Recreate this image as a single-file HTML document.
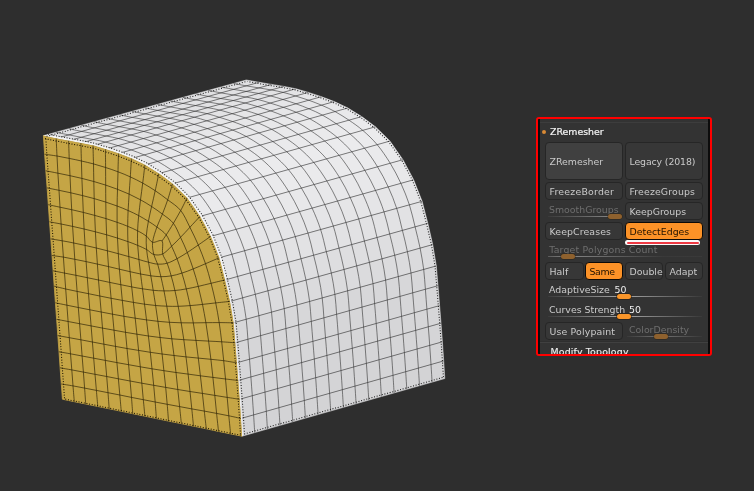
<!DOCTYPE html>
<html><head><meta charset="utf-8"><title>ZRemesher</title>
<style>
html,body{margin:0;padding:0;background:#2e2e2e;}
body{width:754px;height:491px;position:relative;overflow:hidden;font-family:"DejaVu Sans","Liberation Sans",sans-serif;}
.mesh{position:absolute;left:0;top:0;}
.panel{position:absolute;left:536px;top:117px;width:172px;height:235px;border:2px solid #ff0000;border-radius:3px;background:#333333;overflow:hidden;}
.panel .inner{position:absolute;left:-538px;top:-119px;width:754px;height:491px;will-change:transform;}
.blk{position:absolute;left:538px;top:119px;width:2px;height:235px;background:#0c0c0c;}
.sep{position:absolute;height:1px;background:#424242;}
.t{position:absolute;white-space:nowrap;font-size:9.4px;line-height:12px;color:#cdcdcd;}
.btn{position:absolute;box-sizing:border-box;border:1px solid #262626;border-radius:4px;background:#373737;color:#cacaca;font-size:9.4px;white-space:nowrap;}
.btn span{position:absolute;left:3.5px;}
.on{background:#fc9227;color:#241400;border-color:#0c0a08;}
.dis{color:#6e6e6e;}
.sl{position:absolute;height:1.2px;background:linear-gradient(90deg,rgba(130,130,130,0.12),rgba(160,160,160,0.95) 42%,rgba(160,160,160,0.95) 56%,rgba(130,130,130,0.08));}
.sl.f{background:linear-gradient(90deg,rgba(110,110,110,0.2),rgba(135,135,135,0.85) 35%,rgba(135,135,135,0.85) 55%,rgba(110,110,110,0.1));}
.kn{position:absolute;height:5.7px;border-radius:2.85px;background:#f8952a;box-shadow:0 0 0 0.6px rgba(30,18,4,0.75);}
.kn.d{background:#8e612e;box-shadow:0 0 0 0.5px rgba(40,28,12,0.6);}
</style></head><body>
<svg class="mesh" width="754" height="491" viewBox="0 0 754 491">
<g><path d="M43.4,135.7 L246.3,80.0 L259.1,82.3 L56.2,138.4Z" fill="rgb(224,224,226)" stroke="rgb(224,224,226)" stroke-width="0.6"/><path d="M56.2,138.4 L259.1,82.3 L271.5,84.4 L68.6,140.8Z" fill="rgb(225,225,227)" stroke="rgb(225,225,227)" stroke-width="0.6"/><path d="M68.6,140.8 L271.5,84.4 L283.8,86.4 L80.9,143.1Z" fill="rgb(225,225,227)" stroke="rgb(225,225,227)" stroke-width="0.6"/><path d="M80.9,143.1 L283.8,86.4 L295.9,88.8 L93.0,145.6Z" fill="rgb(226,226,228)" stroke="rgb(226,226,228)" stroke-width="0.6"/><path d="M93.0,145.6 L295.9,88.8 L308.3,92.4 L105.4,149.2Z" fill="rgb(227,227,229)" stroke="rgb(227,227,229)" stroke-width="0.6"/><path d="M105.4,149.2 L308.3,92.4 L321.4,96.7 L118.5,153.5Z" fill="rgb(229,229,231)" stroke="rgb(229,229,231)" stroke-width="0.6"/><path d="M118.5,153.5 L321.4,96.7 L334.3,101.6 L131.4,158.5Z" fill="rgb(230,230,232)" stroke="rgb(230,230,232)" stroke-width="0.6"/><path d="M131.4,158.5 L334.3,101.6 L347.8,108.0 L144.9,164.9Z" fill="rgb(232,232,234)" stroke="rgb(232,232,234)" stroke-width="0.6"/><path d="M144.9,164.9 L347.8,108.0 L361.7,116.6 L158.8,173.6Z" fill="rgb(233,233,235)" stroke="rgb(233,233,235)" stroke-width="0.6"/><path d="M158.8,173.6 L361.7,116.6 L375.4,126.8 L172.5,183.8Z" fill="rgb(234,234,236)" stroke="rgb(234,234,236)" stroke-width="0.6"/><path d="M172.5,183.8 L375.4,126.8 L389.9,141.1 L187.0,198.0Z" fill="rgb(235,235,237)" stroke="rgb(235,235,237)" stroke-width="0.6"/><path d="M187.0,198.0 L389.9,141.1 L402.9,159.7 L200.0,216.4Z" fill="rgb(234,234,236)" stroke="rgb(234,234,236)" stroke-width="0.6"/><path d="M200.0,216.4 L402.9,159.7 L413.6,179.8 L210.7,236.4Z" fill="rgb(232,232,234)" stroke="rgb(232,232,234)" stroke-width="0.6"/><path d="M210.7,236.4 L413.6,179.8 L422.1,201.3 L219.2,257.8Z" fill="rgb(229,229,231)" stroke="rgb(229,229,231)" stroke-width="0.6"/><path d="M219.2,257.8 L422.1,201.3 L427.8,223.3 L224.9,280.0Z" fill="rgb(226,226,228)" stroke="rgb(226,226,228)" stroke-width="0.6"/><path d="M224.9,280.0 L427.8,223.3 L432.7,244.6 L229.9,301.4Z" fill="rgb(222,222,224)" stroke="rgb(222,222,224)" stroke-width="0.6"/><path d="M229.9,301.4 L432.7,244.6 L436.3,265.9 L233.5,322.8Z" fill="rgb(219,219,221)" stroke="rgb(219,219,221)" stroke-width="0.6"/><path d="M233.5,322.8 L436.3,265.9 L438.0,285.7 L235.2,342.8Z" fill="rgb(215,215,217)" stroke="rgb(215,215,217)" stroke-width="0.6"/><path d="M235.2,342.8 L438.0,285.7 L439.6,305.6 L236.8,362.8Z" fill="rgb(214,214,216)" stroke="rgb(214,214,216)" stroke-width="0.6"/><path d="M236.8,362.8 L439.6,305.6 L441.0,323.2 L238.2,380.5Z" fill="rgb(214,214,216)" stroke="rgb(214,214,216)" stroke-width="0.6"/><path d="M238.2,380.5 L441.0,323.2 L442.4,341.8 L239.6,399.3Z" fill="rgb(213,213,215)" stroke="rgb(213,213,215)" stroke-width="0.6"/><path d="M239.6,399.3 L442.4,341.8 L443.7,360.9 L240.9,418.5Z" fill="rgb(212,212,214)" stroke="rgb(212,212,214)" stroke-width="0.6"/><path d="M240.9,418.5 L443.7,360.9 L444.8,378.5 L242.0,436.2Z" fill="rgb(211,211,213)" stroke="rgb(211,211,213)" stroke-width="0.6"/></g>
<path d="M56.2,138.4 L259.1,82.3 M68.6,140.8 L271.5,84.4 M80.9,143.1 L283.8,86.4 M93.0,145.6 L295.9,88.8 M105.4,149.2 L308.3,92.4 M118.5,153.5 L321.4,96.7 M131.4,158.5 L334.3,101.6 M144.9,164.9 L347.8,108.0 M158.8,173.6 L361.7,116.6 M172.5,183.8 L375.4,126.8 M187.0,198.0 L389.9,141.1 M200.0,216.4 L402.9,159.7 M210.7,236.4 L413.6,179.8 M219.2,257.8 L422.1,201.3 M224.9,280.0 L427.8,223.3 M229.9,301.4 L432.7,244.6 M233.5,322.8 L436.3,265.9 M235.2,342.8 L438.0,285.7 M236.8,362.8 L439.6,305.6 M238.2,380.5 L441.0,323.2 M239.6,399.3 L442.4,341.8 M240.9,418.5 L443.7,360.9 M56.1,132.2 C58.2,132.7 64.7,134.1 68.9,134.9 C73.1,135.7 77.2,136.5 81.3,137.3 C85.4,138.1 89.5,138.8 93.6,139.6 C97.6,140.3 101.6,141.0 105.7,142.1 C109.8,143.1 113.8,144.3 118.1,145.7 C122.3,147.0 126.8,148.4 131.2,149.9 C135.5,151.5 139.7,153.0 144.1,154.9 C148.5,156.8 153.0,158.8 157.6,161.3 C162.1,163.9 166.9,166.9 171.5,170.0 C176.1,173.2 180.5,176.2 185.2,180.2 C189.9,184.3 195.1,189.0 199.7,194.4 C204.3,199.9 208.7,206.5 212.7,212.9 C216.6,219.3 220.2,226.0 223.4,232.9 C226.6,239.8 229.5,247.0 231.9,254.3 C234.2,261.5 235.8,269.2 237.6,276.5 C239.4,283.7 241.1,290.7 242.6,297.8 C244.0,305.0 245.3,312.3 246.2,319.2 C247.1,326.1 247.3,332.6 247.9,339.2 C248.4,345.9 249.0,352.9 249.5,359.2 C250.0,365.5 250.4,370.8 250.9,376.9 C251.3,383.0 251.8,389.4 252.3,395.7 C252.7,402.0 253.2,408.8 253.6,414.9 C254.0,421.0 254.5,429.6 254.7,432.6 M68.8,128.7 C70.9,129.2 77.4,130.6 81.6,131.4 C85.8,132.2 89.8,133.0 94.0,133.7 C98.1,134.5 102.2,135.2 106.3,136.0 C110.3,136.8 114.3,137.5 118.4,138.5 C122.4,139.5 126.5,140.8 130.8,142.1 C135.0,143.4 139.5,144.8 143.9,146.4 C148.2,147.9 152.4,149.5 156.8,151.4 C161.2,153.3 165.7,155.3 170.3,157.8 C174.8,160.3 179.6,163.3 184.2,166.5 C188.8,169.6 193.2,172.6 197.9,176.7 C202.6,180.7 207.8,185.5 212.4,190.9 C216.9,196.3 221.4,202.9 225.4,209.3 C229.3,215.7 232.9,222.4 236.1,229.3 C239.3,236.2 242.2,243.5 244.6,250.7 C246.9,258.0 248.5,265.7 250.3,272.9 C252.0,280.2 253.8,287.2 255.3,294.3 C256.7,301.4 258.0,308.8 258.9,315.7 C259.7,322.6 260.0,329.0 260.6,335.7 C261.1,342.3 261.7,349.4 262.2,355.6 C262.7,361.9 263.1,367.3 263.6,373.3 C264.0,379.4 264.5,385.8 265.0,392.1 C265.4,398.4 265.9,405.2 266.3,411.3 C266.7,417.4 267.2,426.0 267.4,429.0 M81.4,125.3 C83.6,125.7 90.0,127.1 94.2,127.9 C98.4,128.7 102.5,129.5 106.6,130.2 C110.8,131.0 114.9,131.7 118.9,132.5 C123.0,133.2 127.0,133.9 131.0,135.0 C135.1,136.0 139.2,137.2 143.4,138.6 C147.7,139.9 152.2,141.3 156.5,142.8 C160.9,144.4 165.0,145.9 169.4,147.8 C173.8,149.7 178.4,151.7 182.9,154.2 C187.5,156.7 192.2,159.8 196.8,162.9 C201.4,166.1 205.8,169.0 210.5,173.1 C215.2,177.2 220.5,181.9 225.0,187.3 C229.6,192.8 234.1,199.4 238.0,205.8 C242.0,212.2 245.5,218.9 248.7,225.8 C251.9,232.7 254.9,239.9 257.2,247.2 C259.6,254.5 261.2,262.1 262.9,269.4 C264.7,276.6 266.5,283.6 267.9,290.7 C269.4,297.9 270.6,305.2 271.5,312.1 C272.4,319.0 272.7,325.4 273.2,332.1 C273.8,338.8 274.3,345.8 274.8,352.1 C275.3,358.3 275.8,363.7 276.2,369.8 C276.7,375.8 277.2,382.2 277.6,388.5 C278.1,394.9 278.5,401.6 278.9,407.7 C279.3,413.8 279.8,422.4 280.0,425.4 M94.1,121.8 C96.3,122.2 102.7,123.6 106.9,124.4 C111.1,125.2 115.2,125.9 119.3,126.7 C123.4,127.5 127.6,128.1 131.6,128.9 C135.7,129.7 139.6,130.4 143.7,131.4 C147.8,132.4 151.9,133.7 156.1,135.0 C160.4,136.3 164.9,137.7 169.2,139.3 C173.6,140.8 177.7,142.4 182.1,144.3 C186.5,146.2 191.1,148.2 195.6,150.7 C200.2,153.2 204.9,156.2 209.5,159.4 C214.1,162.5 218.5,165.5 223.2,169.5 C227.9,173.6 233.1,178.3 237.7,183.8 C242.3,189.2 246.8,195.8 250.7,202.2 C254.7,208.6 258.2,215.3 261.4,222.2 C264.6,229.2 267.5,236.4 269.9,243.7 C272.3,250.9 273.8,258.6 275.6,265.8 C277.4,273.1 279.2,280.1 280.6,287.2 C282.0,294.3 283.3,301.7 284.2,308.6 C285.1,315.5 285.4,321.9 285.9,328.5 C286.5,335.2 287.0,342.2 287.5,348.5 C288.0,354.8 288.4,360.1 288.9,366.2 C289.4,372.2 289.9,378.6 290.3,384.9 C290.8,391.3 291.2,398.0 291.6,404.1 C292.0,410.2 292.5,418.8 292.7,421.8 M106.8,118.3 C108.9,118.7 115.4,120.1 119.6,120.9 C123.8,121.7 127.9,122.4 132.0,123.2 C136.1,123.9 140.2,124.6 144.3,125.4 C148.4,126.1 152.3,126.8 156.4,127.9 C160.5,128.9 164.6,130.1 168.8,131.5 C173.1,132.8 177.6,134.2 181.9,135.7 C186.2,137.3 190.4,138.8 194.8,140.7 C199.2,142.6 203.7,144.6 208.3,147.1 C212.9,149.6 217.6,152.7 222.2,155.8 C226.8,158.9 231.2,161.9 235.9,166.0 C240.6,170.1 245.8,174.8 250.4,180.2 C255.0,185.7 259.4,192.3 263.4,198.7 C267.3,205.1 270.9,211.8 274.1,218.7 C277.3,225.6 280.2,232.9 282.6,240.1 C285.0,247.4 286.5,255.0 288.3,262.3 C290.1,269.5 291.9,276.5 293.3,283.6 C294.7,290.8 296.0,298.1 296.9,305.0 C297.8,311.9 298.0,318.3 298.6,325.0 C299.1,331.6 299.7,338.7 300.2,344.9 C300.7,351.2 301.1,356.5 301.6,362.6 C302.0,368.7 302.5,375.0 303.0,381.3 C303.4,387.7 303.9,394.4 304.3,400.5 C304.7,406.6 305.2,415.2 305.4,418.2 M119.5,114.8 C121.6,115.2 128.1,116.6 132.3,117.4 C136.5,118.2 140.6,118.9 144.7,119.6 C148.8,120.4 152.9,121.0 157.0,121.8 C161.1,122.6 165.0,123.3 169.1,124.3 C173.2,125.3 177.2,126.6 181.5,127.9 C185.7,129.2 190.3,130.6 194.6,132.2 C198.9,133.7 203.1,135.3 207.5,137.2 C211.9,139.1 216.4,141.1 221.0,143.6 C225.6,146.1 230.3,149.1 234.9,152.2 C239.5,155.4 243.9,158.3 248.6,162.4 C253.3,166.5 258.5,171.2 263.1,176.7 C267.7,182.1 272.1,188.7 276.1,195.1 C280.0,201.5 283.6,208.3 286.8,215.2 C290.0,222.1 292.9,229.3 295.3,236.6 C297.6,243.9 299.2,251.5 301.0,258.8 C302.8,266.0 304.5,273.0 306.0,280.1 C307.4,287.2 308.7,294.6 309.6,301.4 C310.4,308.3 310.7,314.7 311.3,321.4 C311.8,328.0 312.4,335.1 312.9,341.3 C313.4,347.6 313.8,352.9 314.3,359.0 C314.7,365.1 315.2,371.4 315.7,377.8 C316.1,384.1 316.6,390.8 317.0,396.9 C317.4,403.0 317.9,411.6 318.1,414.6 M132.2,111.3 C134.3,111.8 140.8,113.1 145.0,113.9 C149.2,114.7 153.3,115.4 157.4,116.1 C161.5,116.9 165.6,117.5 169.7,118.3 C173.7,119.0 177.7,119.8 181.8,120.8 C185.9,121.8 189.9,123.0 194.2,124.4 C198.4,125.7 202.9,127.1 207.3,128.6 C211.6,130.2 215.8,131.7 220.2,133.6 C224.6,135.5 229.1,137.5 233.7,140.0 C238.2,142.5 243.0,145.5 247.6,148.7 C252.2,151.8 256.6,154.8 261.3,158.9 C266.0,162.9 271.2,167.7 275.8,173.1 C280.3,178.6 284.8,185.2 288.8,191.6 C292.7,198.0 296.3,204.7 299.5,211.6 C302.7,218.5 305.6,225.8 308.0,233.1 C310.3,240.3 311.9,248.0 313.6,255.2 C315.4,262.5 317.2,269.4 318.6,276.5 C320.1,283.7 321.4,291.0 322.2,297.9 C323.1,304.8 323.4,311.2 323.9,317.8 C324.5,324.5 325.0,331.5 325.5,337.8 C326.0,344.0 326.5,349.4 326.9,355.4 C327.4,361.5 327.9,367.8 328.3,374.2 C328.8,380.5 329.2,387.2 329.6,393.3 C330.0,399.4 330.5,408.0 330.7,411.0 M144.8,107.8 C147.0,108.3 153.4,109.6 157.6,110.4 C161.8,111.2 165.9,111.9 170.0,112.6 C174.2,113.3 178.3,114.0 182.3,114.7 C186.4,115.5 190.4,116.2 194.4,117.2 C198.5,118.2 202.6,119.5 206.8,120.8 C211.1,122.1 215.6,123.5 219.9,125.1 C224.3,126.6 228.4,128.2 232.8,130.1 C237.2,132.0 241.8,133.9 246.3,136.5 C250.9,139.0 255.6,142.0 260.2,145.1 C264.8,148.3 269.2,151.2 273.9,155.3 C278.6,159.4 283.9,164.1 288.4,169.6 C293.0,175.0 297.5,181.6 301.4,188.0 C305.4,194.5 308.9,201.2 312.1,208.1 C315.3,215.0 318.3,222.3 320.6,229.5 C323.0,236.8 324.5,244.4 326.3,251.7 C328.1,258.9 329.9,265.9 331.3,273.0 C332.8,280.1 334.0,287.5 334.9,294.3 C335.8,301.2 336.1,307.6 336.6,314.3 C337.2,320.9 337.7,327.9 338.2,334.2 C338.7,340.5 339.1,345.8 339.6,351.8 C340.1,357.9 340.6,364.3 341.0,370.6 C341.5,376.9 341.9,383.6 342.3,389.7 C342.7,395.8 343.2,404.4 343.4,407.4 M157.5,104.4 C159.7,104.8 166.1,106.1 170.3,106.9 C174.5,107.7 178.6,108.4 182.7,109.1 C186.8,109.8 191.0,110.4 195.0,111.2 C199.1,111.9 203.0,112.7 207.1,113.7 C211.2,114.7 215.3,115.9 219.5,117.3 C223.8,118.6 228.3,120.0 232.6,121.5 C237.0,123.1 241.1,124.6 245.5,126.5 C249.9,128.4 254.5,130.4 259.0,132.9 C263.6,135.4 268.3,138.4 272.9,141.6 C277.5,144.7 281.9,147.7 286.6,151.7 C291.3,155.8 296.5,160.6 301.1,166.0 C305.7,171.5 310.2,178.1 314.1,184.5 C318.1,190.9 321.6,197.6 324.8,204.6 C328.0,211.5 330.9,218.7 333.3,226.0 C335.7,233.3 337.2,240.9 339.0,248.1 C340.8,255.4 342.6,262.3 344.0,269.4 C345.4,276.6 346.7,283.9 347.6,290.8 C348.5,297.6 348.7,304.1 349.3,310.7 C349.8,317.3 350.4,324.4 350.9,330.6 C351.4,336.9 351.8,342.2 352.3,348.3 C352.8,354.3 353.2,360.7 353.7,367.0 C354.1,373.3 354.6,380.0 355.0,386.1 C355.4,392.2 355.9,400.8 356.1,403.7 M170.2,100.9 C172.3,101.3 178.8,102.6 183.0,103.4 C187.2,104.1 191.3,104.8 195.4,105.5 C199.5,106.3 203.6,106.9 207.7,107.6 C211.8,108.4 215.7,109.1 219.8,110.1 C223.9,111.1 228.0,112.4 232.2,113.7 C236.5,115.0 241.0,116.4 245.3,118.0 C249.6,119.5 253.8,121.1 258.2,123.0 C262.6,124.9 267.1,126.8 271.7,129.3 C276.3,131.8 281.0,134.9 285.6,138.0 C290.2,141.1 294.6,144.1 299.3,148.2 C304.0,152.2 309.2,157.0 313.8,162.5 C318.4,167.9 322.8,174.5 326.8,180.9 C330.7,187.4 334.3,194.1 337.5,201.0 C340.7,207.9 343.6,215.2 346.0,222.5 C348.4,229.7 349.9,237.4 351.7,244.6 C353.5,251.8 355.2,258.8 356.7,265.9 C358.1,273.0 359.4,280.3 360.3,287.2 C361.2,294.1 361.4,300.5 362.0,307.1 C362.5,313.8 363.1,320.8 363.6,327.0 C364.1,333.3 364.5,338.6 365.0,344.7 C365.4,350.7 365.9,357.1 366.4,363.4 C366.8,369.7 367.3,376.4 367.7,382.5 C368.1,388.6 368.6,397.2 368.8,400.1 M182.9,97.4 C185.0,97.8 191.5,99.1 195.7,99.9 C199.9,100.6 204.0,101.3 208.1,102.0 C212.2,102.7 216.3,103.3 220.4,104.1 C224.5,104.8 228.4,105.6 232.5,106.6 C236.6,107.6 240.6,108.8 244.9,110.2 C249.1,111.5 253.7,112.9 258.0,114.4 C262.3,116.0 266.5,117.5 270.9,119.4 C275.3,121.3 279.8,123.3 284.4,125.8 C289.0,128.3 293.7,131.3 298.3,134.4 C302.9,137.6 307.3,140.5 312.0,144.6 C316.7,148.7 321.9,153.4 326.5,158.9 C331.1,164.4 335.5,171.0 339.5,177.4 C343.4,183.8 347.0,190.5 350.2,197.5 C353.4,204.4 356.3,211.7 358.7,218.9 C361.0,226.2 362.6,233.8 364.4,241.0 C366.1,248.3 367.9,255.2 369.4,262.3 C370.8,269.4 372.1,276.8 373.0,283.7 C373.8,290.5 374.1,296.9 374.6,303.6 C375.2,310.2 375.7,317.2 376.2,323.5 C376.7,329.7 377.2,335.0 377.6,341.1 C378.1,347.1 378.6,353.5 379.0,359.8 C379.5,366.1 379.9,372.8 380.3,378.9 C380.7,385.0 381.2,393.6 381.4,396.5 M195.6,93.9 C197.7,94.3 204.2,95.6 208.4,96.4 C212.6,97.1 216.7,97.8 220.8,98.5 C224.9,99.2 229.0,99.8 233.1,100.5 C237.1,101.3 241.1,102.0 245.2,103.0 C249.3,104.0 253.3,105.3 257.6,106.6 C261.8,107.9 266.3,109.3 270.7,110.9 C275.0,112.4 279.2,114.0 283.6,115.9 C288.0,117.8 292.5,119.7 297.1,122.2 C301.6,124.7 306.4,127.8 311.0,130.9 C315.6,134.0 320.0,137.0 324.7,141.0 C329.4,145.1 334.6,149.9 339.2,155.4 C343.7,160.8 348.2,167.4 352.2,173.8 C356.1,180.3 359.7,187.0 362.8,193.9 C366.0,200.9 369.0,208.2 371.3,215.4 C373.7,222.7 375.3,230.3 377.0,237.5 C378.8,244.7 380.6,251.7 382.0,258.8 C383.5,265.9 384.7,273.2 385.6,280.1 C386.5,287.0 386.8,293.4 387.3,300.0 C387.9,306.6 388.4,313.6 388.9,319.9 C389.4,326.1 389.8,331.5 390.3,337.5 C390.8,343.6 391.3,349.9 391.7,356.2 C392.2,362.5 392.6,369.2 393.0,375.3 C393.4,381.4 393.9,390.0 394.1,392.9 M208.3,90.4 C210.4,90.8 216.9,92.1 221.1,92.9 C225.3,93.6 229.3,94.3 233.5,95.0 C237.6,95.7 241.7,96.2 245.8,97.0 C249.8,97.7 253.8,98.5 257.9,99.5 C261.9,100.5 266.0,101.7 270.3,103.1 C274.5,104.4 279.0,105.8 283.4,107.3 C287.7,108.9 291.9,110.4 296.3,112.3 C300.6,114.2 305.2,116.2 309.7,118.7 C314.3,121.2 319.0,124.2 323.6,127.3 C328.2,130.5 332.6,133.4 337.3,137.5 C342.0,141.5 347.3,146.3 351.8,151.8 C356.4,157.3 360.9,163.9 364.8,170.3 C368.8,176.7 372.3,183.5 375.5,190.4 C378.7,197.3 381.7,204.6 384.0,211.9 C386.4,219.1 387.9,226.7 389.7,234.0 C391.5,241.2 393.3,248.2 394.7,255.2 C396.1,262.3 397.4,269.7 398.3,276.5 C399.2,283.4 399.5,289.8 400.0,296.4 C400.5,303.1 401.1,310.1 401.6,316.3 C402.1,322.6 402.5,327.9 403.0,333.9 C403.5,340.0 403.9,346.3 404.4,352.6 C404.8,358.9 405.3,365.6 405.7,371.7 C406.1,377.8 406.6,386.4 406.8,389.3 M220.9,87.0 C223.1,87.4 229.5,88.6 233.7,89.4 C237.9,90.1 242.0,90.8 246.1,91.4 C250.3,92.1 254.4,92.7 258.4,93.4 C262.5,94.2 266.5,94.9 270.5,95.9 C274.6,96.9 278.7,98.2 282.9,99.5 C287.2,100.8 291.7,102.2 296.0,103.8 C300.4,105.3 304.5,106.9 308.9,108.8 C313.3,110.6 317.9,112.6 322.4,115.1 C327.0,117.6 331.7,120.6 336.3,123.8 C340.9,126.9 345.3,129.8 350.0,133.9 C354.7,138.0 359.9,142.8 364.5,148.2 C369.1,153.7 373.6,160.3 377.5,166.8 C381.5,173.2 385.0,179.9 388.2,186.9 C391.4,193.8 394.3,201.1 396.7,208.4 C399.1,215.6 400.6,223.2 402.4,230.4 C404.2,237.6 406.0,244.6 407.4,251.7 C408.8,258.8 410.1,266.1 411.0,273.0 C411.9,279.8 412.1,286.2 412.7,292.9 C413.2,299.5 413.8,306.5 414.3,312.7 C414.8,319.0 415.2,324.3 415.7,330.3 C416.1,336.4 416.6,342.7 417.1,349.0 C417.5,355.3 418.0,362.0 418.4,368.1 C418.8,374.2 419.3,382.8 419.5,385.7 M233.6,83.5 C235.8,83.9 242.2,85.1 246.4,85.9 C250.6,86.6 254.7,87.3 258.8,87.9 C262.9,88.6 267.1,89.2 271.1,89.9 C275.2,90.6 279.1,91.4 283.2,92.4 C287.3,93.4 291.4,94.7 295.6,96.0 C299.9,97.3 304.4,98.7 308.7,100.2 C313.0,101.8 317.2,103.3 321.6,105.2 C326.0,107.1 330.5,109.1 335.1,111.6 C339.7,114.1 344.4,117.1 349.0,120.2 C353.6,123.3 358.0,126.3 362.7,130.3 C367.4,134.4 372.6,139.2 377.2,144.7 C381.8,150.2 386.2,156.8 390.2,163.2 C394.1,169.6 397.7,176.4 400.9,183.3 C404.1,190.3 407.0,197.6 409.4,204.8 C411.7,212.1 413.3,219.7 415.1,226.9 C416.9,234.1 418.6,241.1 420.1,248.1 C421.5,255.2 422.8,262.6 423.7,269.4 C424.5,276.3 424.8,282.7 425.4,289.3 C425.9,295.9 426.4,302.9 426.9,309.2 C427.4,315.4 427.9,320.7 428.3,326.8 C428.8,332.8 429.3,339.1 429.7,345.4 C430.2,351.7 430.6,358.4 431.0,364.5 C431.4,370.6 431.9,379.2 432.1,382.1" fill="none" stroke="#2b2b2b" stroke-opacity="0.6" stroke-width="0.95"/>
<path d="M43.4,135.7 L56.2,138.4 L68.6,140.8 L80.9,143.1 L93.0,145.6 L105.4,149.2 L118.5,153.5 L131.4,158.5 L144.9,164.9 L158.8,173.6 L172.5,183.8 L187.0,198.0 L200.0,216.4 L210.7,236.4 L219.2,257.8 L224.9,280.0 L229.9,301.4 L233.5,322.8 L235.2,342.8 L236.8,362.8 L238.2,380.5 L239.6,399.3 L240.9,418.5 L242.0,436.2 L230.6,433.9 L218.5,431.4 L206.3,428.8 L193.5,426.2 L181.4,423.7 L168.5,421.1 L156.4,418.6 L144.9,416.2 L132.7,413.7 L121.3,411.3 L109.2,408.8 L97.8,406.5 L85.7,404.0 L74.3,401.7 L62.4,399.2 L61.3,384.0 L60.1,367.8 L59.0,351.8 L57.8,335.6 L56.6,319.3 L55.4,302.8 L54.2,286.2 L53.1,270.8 L52.0,255.5 L50.8,238.9 L49.5,221.8 L48.3,204.7 L47.1,187.9 L45.8,170.8 L44.6,154.2Z" fill="#c5a545" stroke="#c5a545" stroke-width="0.8"/>
<path d="M74.3,401.7 C74.1,399.0 73.4,391.2 73.0,385.9 C72.6,380.6 72.2,375.3 71.8,369.9 C71.4,364.6 71.0,359.2 70.5,353.8 C70.1,348.5 69.7,343.1 69.3,337.7 C68.9,332.3 68.5,326.9 68.1,321.5 C67.7,316.0 67.3,310.6 66.9,305.2 C66.5,299.8 66.1,294.3 65.7,289.0 C65.3,283.6 64.9,278.4 64.5,273.1 C64.1,267.8 63.8,262.5 63.4,257.1 C63.0,251.8 62.6,246.3 62.2,240.8 C61.9,235.2 61.5,229.6 61.1,224.0 C60.7,218.5 60.4,212.8 60.0,207.2 C59.7,201.6 59.3,195.9 59.0,190.3 C58.6,184.6 58.3,178.9 57.9,173.2 C57.6,167.5 57.3,161.8 57.0,156.0 C56.7,150.2 56.3,141.3 56.2,138.4 M85.7,404.0 C85.5,401.3 85.0,393.4 84.6,388.1 C84.2,382.8 83.8,377.4 83.4,372.1 C83.0,366.7 82.5,361.4 82.1,356.0 C81.7,350.6 81.3,345.2 80.9,339.8 C80.4,334.5 80.0,329.1 79.6,323.7 C79.2,318.3 78.8,312.9 78.3,307.5 C77.9,302.1 77.5,296.7 77.1,291.4 C76.7,286.0 76.3,280.7 75.9,275.3 C75.5,270.0 75.1,264.7 74.8,259.3 C74.4,253.9 74.0,248.4 73.7,243.0 C73.3,237.5 73.0,232.0 72.6,226.4 C72.3,220.9 72.0,215.3 71.7,209.7 C71.4,204.1 71.1,198.5 70.8,192.8 C70.5,187.2 70.2,181.5 70.0,175.7 C69.7,170.0 69.5,164.2 69.2,158.4 C69.0,152.6 68.7,143.7 68.6,140.8 M97.8,406.5 C97.6,403.8 96.8,395.8 96.4,390.4 C95.9,385.0 95.5,379.7 95.0,374.3 C94.6,368.9 94.2,363.5 93.7,358.2 C93.3,352.8 92.8,347.4 92.4,342.0 C92.0,336.7 91.5,331.3 91.1,325.9 C90.6,320.5 90.2,315.1 89.8,309.8 C89.3,304.4 88.9,299.1 88.5,293.7 C88.1,288.4 87.7,283.0 87.3,277.7 C86.9,272.3 86.5,267.0 86.1,261.6 C85.7,256.2 85.4,250.8 85.1,245.4 C84.7,240.0 84.4,234.5 84.1,229.0 C83.8,223.5 83.5,218.0 83.3,212.4 C83.0,206.9 82.8,201.2 82.6,195.6 C82.3,189.9 82.1,184.2 81.9,178.4 C81.7,172.7 81.6,166.8 81.4,161.0 C81.2,155.1 81.0,146.1 80.9,143.1 M109.2,408.8 C109.0,406.2 108.4,398.1 108.0,392.7 C107.6,387.3 107.1,381.9 106.7,376.5 C106.2,371.2 105.8,365.8 105.3,360.4 C104.9,355.0 104.4,349.6 103.9,344.2 C103.5,338.8 103.0,333.5 102.5,328.1 C102.1,322.7 101.6,317.4 101.2,312.0 C100.7,306.7 100.3,301.3 99.8,296.0 C99.4,290.7 99.0,285.4 98.5,280.0 C98.1,274.7 97.7,269.4 97.4,264.1 C97.0,258.7 96.6,253.4 96.3,248.0 C96.0,242.6 95.7,237.2 95.4,231.8 C95.2,226.4 94.9,220.9 94.7,215.4 C94.5,209.9 94.4,204.3 94.2,198.6 C94.1,193.0 93.9,187.3 93.8,181.5 C93.7,175.7 93.6,169.9 93.5,163.9 C93.3,157.9 93.1,148.6 93.0,145.6 M121.3,411.3 C121.0,408.6 120.3,400.5 119.8,395.0 C119.3,389.6 118.8,384.2 118.4,378.8 C117.9,373.4 117.4,368.0 116.9,362.6 C116.5,357.2 116.0,351.8 115.5,346.4 C115.0,341.0 114.5,335.6 114.0,330.2 C113.5,324.9 113.0,319.5 112.5,314.2 C112.1,308.9 111.6,303.6 111.1,298.3 C110.6,293.0 110.2,287.7 109.7,282.4 C109.3,277.1 108.9,271.9 108.5,266.6 C108.1,261.3 107.7,256.1 107.4,250.8 C107.1,245.5 106.8,240.2 106.6,234.8 C106.4,229.5 106.2,224.1 106.0,218.6 C105.9,213.2 105.8,207.7 105.8,202.1 C105.7,196.5 105.7,190.9 105.7,185.1 C105.6,179.3 105.7,173.5 105.6,167.5 C105.6,161.5 105.4,152.2 105.4,149.2 M132.7,413.7 C132.5,411.0 131.9,402.8 131.5,397.4 C131.0,391.9 130.5,386.5 130.1,381.0 C129.6,375.6 129.1,370.1 128.6,364.7 C128.1,359.3 127.6,353.9 127.0,348.5 C126.5,343.1 126.0,337.7 125.5,332.3 C124.9,326.9 124.4,321.6 123.9,316.3 C123.3,311.0 122.8,305.7 122.3,300.4 C121.8,295.2 121.3,289.9 120.8,284.7 C120.3,279.5 119.8,274.3 119.4,269.2 C119.0,264.0 118.6,258.8 118.3,253.7 C118.0,248.5 117.7,243.3 117.5,238.1 C117.3,232.9 117.1,227.6 117.1,222.3 C117.0,216.9 117.0,211.5 117.1,206.0 C117.2,200.5 117.3,195.0 117.5,189.3 C117.6,183.5 117.8,177.7 118.0,171.8 C118.1,165.8 118.4,156.5 118.5,153.5 M144.9,416.2 C144.6,413.4 143.9,405.2 143.3,399.7 C142.8,394.2 142.4,388.7 141.8,383.2 C141.3,377.7 140.8,372.2 140.3,366.8 C139.7,361.3 139.2,355.9 138.6,350.4 C138.1,345.0 137.5,339.6 136.9,334.2 C136.4,328.9 135.8,323.5 135.2,318.2 C134.6,312.9 134.0,307.6 133.4,302.4 C132.8,297.2 132.3,292.0 131.7,286.9 C131.2,281.8 130.6,276.7 130.1,271.7 C129.6,266.6 129.2,261.6 128.8,256.6 C128.4,251.6 128.1,246.6 127.9,241.6 C127.7,236.5 127.7,231.5 127.7,226.3 C127.7,221.1 127.9,215.9 128.1,210.5 C128.4,205.1 128.8,199.7 129.1,194.1 C129.5,188.5 129.9,182.8 130.3,176.9 C130.7,170.9 131.2,161.6 131.4,158.5 M156.4,418.6 C156.2,415.8 155.6,407.5 155.2,402.0 C154.7,396.4 154.2,390.9 153.7,385.3 C153.2,379.8 152.6,374.3 152.0,368.8 C151.5,363.3 150.9,357.8 150.3,352.3 C149.7,346.8 149.1,341.4 148.4,336.0 C147.8,330.6 147.2,325.2 146.5,319.9 C145.9,314.6 145.2,309.3 144.5,304.2 C143.8,299.0 143.2,293.9 142.5,288.8 C141.8,283.8 141.2,278.8 140.6,274.0 C140.0,269.1 139.4,264.3 138.9,259.5 C138.4,254.8 138.0,250.2 137.7,245.4 C137.5,240.6 137.4,235.8 137.6,230.8 C137.7,225.9 138.2,220.8 138.7,215.6 C139.2,210.4 139.9,205.2 140.5,199.8 C141.2,194.4 142.0,188.9 142.7,183.1 C143.5,177.3 144.5,167.9 144.9,164.9 M168.5,421.1 C168.3,418.3 167.7,409.9 167.2,404.3 C166.7,398.7 166.2,393.0 165.7,387.4 C165.1,381.8 164.5,376.2 163.9,370.7 C163.3,365.1 162.7,359.5 162.1,354.0 C161.4,348.5 160.7,343.0 160.1,337.5 C159.4,332.1 158.6,326.6 157.9,321.3 C157.2,316.0 156.4,310.7 155.6,305.5 C154.8,300.3 154.0,295.2 153.2,290.3 C152.4,285.3 151.6,280.4 150.8,275.8 C150.0,271.1 149.2,266.6 148.5,262.2 C147.8,257.9 146.9,253.9 146.6,249.5 C146.2,245.1 146.0,240.7 146.3,236.0 C146.6,231.3 147.5,226.2 148.4,221.3 C149.3,216.4 150.5,211.6 151.6,206.5 C152.8,201.4 154.0,196.2 155.2,190.7 C156.4,185.3 158.2,176.5 158.8,173.6 M181.4,423.7 C181.1,420.9 180.2,412.3 179.6,406.6 C179.0,400.9 178.4,395.2 177.8,389.5 C177.2,383.8 176.6,378.1 176.0,372.5 C175.3,366.8 174.7,361.1 174.0,355.5 C173.3,349.9 172.6,344.3 171.8,338.8 C171.0,333.2 170.3,327.7 169.4,322.3 C168.6,316.9 167.7,311.5 166.8,306.2 C165.9,301.0 164.9,295.8 164.0,290.9 C163.0,286.0 161.9,281.1 160.9,276.7 C159.8,272.2 158.7,267.8 157.6,264.1 C156.4,260.5 154.6,258.1 153.8,254.5 C153.0,250.9 152.1,246.9 152.6,242.3 C153.1,237.7 155.3,231.7 156.9,227.0 C158.5,222.3 160.6,218.7 162.4,214.1 C164.2,209.6 166.0,204.9 167.7,199.8 C169.4,194.7 171.7,186.5 172.5,183.8 M162.0,241.0 C162.7,240.0 164.3,237.8 166.2,234.9 C168.1,232.0 171.0,227.4 173.4,223.3 C175.8,219.2 178.4,214.7 180.7,210.5 C183.0,206.3 185.9,200.1 187.0,198.0 M61.3,384.0 C63.2,384.3 69.1,385.2 73.0,385.9 C76.9,386.6 80.7,387.3 84.6,388.1 C88.5,388.8 92.5,389.6 96.4,390.4 C100.3,391.2 104.1,391.9 108.0,392.7 C111.9,393.5 115.9,394.3 119.8,395.0 C123.7,395.8 127.5,396.6 131.5,397.4 C135.4,398.1 139.4,398.9 143.3,399.7 C147.3,400.4 151.2,401.2 155.2,402.0 C159.1,402.7 163.2,403.5 167.2,404.3 C171.3,405.0 175.5,405.8 179.6,406.6 C183.7,407.3 187.7,408.1 191.8,408.9 C196.0,409.6 200.2,410.4 204.3,411.1 C208.4,411.9 212.5,412.6 216.6,413.4 C220.7,414.2 224.8,414.9 228.8,415.8 C232.9,416.6 238.9,418.0 240.9,418.5 M60.1,367.8 C62.1,368.2 67.9,369.2 71.8,369.9 C75.6,370.6 79.5,371.3 83.4,372.1 C87.3,372.8 91.2,373.5 95.0,374.3 C98.9,375.0 102.8,375.8 106.7,376.5 C110.6,377.3 114.5,378.0 118.4,378.8 C122.3,379.5 126.2,380.3 130.1,381.0 C134.0,381.7 137.9,382.5 141.8,383.2 C145.8,383.9 149.7,384.6 153.7,385.3 C157.6,386.1 161.6,386.8 165.7,387.4 C169.7,388.1 173.7,388.8 177.8,389.5 C181.9,390.2 185.9,390.8 190.0,391.5 C194.1,392.1 198.3,392.8 202.4,393.4 C206.5,394.1 210.6,394.7 214.8,395.4 C218.9,396.1 223.0,396.7 227.2,397.4 C231.3,398.0 237.5,399.0 239.6,399.3 M59.0,351.8 C60.9,352.1 66.7,353.1 70.5,353.8 C74.4,354.5 78.3,355.3 82.1,356.0 C86.0,356.7 89.9,357.4 93.7,358.2 C97.6,358.9 101.5,359.6 105.3,360.4 C109.2,361.1 113.1,361.8 116.9,362.6 C120.8,363.3 124.7,364.0 128.6,364.7 C132.5,365.4 136.4,366.1 140.3,366.8 C144.2,367.5 148.1,368.1 152.0,368.8 C156.0,369.4 159.9,370.1 163.9,370.7 C167.9,371.3 171.9,371.9 176.0,372.5 C180.0,373.0 184.0,373.6 188.1,374.1 C192.2,374.7 196.3,375.2 200.4,375.8 C204.6,376.3 208.7,376.8 212.9,377.4 C217.1,377.9 221.3,378.5 225.5,379.0 C229.7,379.5 236.1,380.2 238.2,380.5 M57.8,335.6 C59.7,335.9 65.5,337.0 69.3,337.7 C73.2,338.4 77.0,339.1 80.9,339.8 C84.7,340.6 88.6,341.3 92.4,342.0 C96.2,342.8 100.1,343.5 103.9,344.2 C107.8,344.9 111.6,345.7 115.5,346.4 C119.3,347.1 123.2,347.8 127.0,348.5 C130.9,349.1 134.8,349.8 138.6,350.4 C142.5,351.1 146.4,351.7 150.3,352.3 C154.2,352.9 158.1,353.5 162.1,354.0 C166.0,354.5 170.0,355.0 174.0,355.5 C178.0,356.0 182.0,356.4 186.0,356.9 C190.1,357.3 194.2,357.7 198.3,358.1 C202.5,358.5 206.7,358.9 210.9,359.3 C215.1,359.8 219.4,360.1 223.7,360.7 C228.0,361.3 234.6,362.5 236.8,362.8 M56.6,319.3 C58.5,319.7 64.3,320.7 68.1,321.5 C71.9,322.2 75.8,322.9 79.6,323.7 C83.4,324.4 87.3,325.2 91.1,325.9 C94.9,326.6 98.7,327.4 102.5,328.1 C106.4,328.8 110.2,329.5 114.0,330.2 C117.8,330.9 121.6,331.6 125.5,332.3 C129.3,333.0 133.1,333.6 136.9,334.2 C140.8,334.9 144.6,335.4 148.4,336.0 C152.3,336.5 156.2,337.1 160.1,337.5 C163.9,338.0 167.8,338.4 171.8,338.8 C175.7,339.1 179.7,339.4 183.8,339.7 C187.8,340.0 191.9,340.2 196.0,340.4 C200.1,340.7 204.3,340.8 208.6,341.1 C212.9,341.3 217.2,341.5 221.7,341.8 C226.1,342.1 232.9,342.6 235.2,342.8 M55.4,302.8 C57.3,303.2 63.1,304.4 66.9,305.2 C70.7,306.0 74.5,306.7 78.3,307.5 C82.2,308.3 86.0,309.0 89.8,309.8 C93.6,310.5 97.4,311.3 101.2,312.0 C105.0,312.8 108.8,313.5 112.5,314.2 C116.3,314.9 120.1,315.6 123.9,316.3 C127.6,317.0 131.4,317.6 135.2,318.2 C139.0,318.8 142.7,319.4 146.5,319.9 C150.3,320.4 154.1,320.9 157.9,321.3 C161.7,321.7 165.5,322.0 169.4,322.3 C173.3,322.5 177.2,322.7 181.2,322.8 C185.2,322.9 189.2,322.9 193.3,322.9 C197.4,322.9 201.6,322.8 205.9,322.7 C210.2,322.7 214.6,322.5 219.2,322.6 C223.8,322.6 231.1,322.8 233.5,322.8 M54.2,286.2 C56.1,286.7 61.9,288.1 65.7,289.0 C69.5,289.8 73.3,290.6 77.1,291.4 C80.9,292.2 84.7,292.9 88.5,293.7 C92.3,294.5 96.1,295.3 99.8,296.0 C103.6,296.8 107.4,297.5 111.1,298.3 C114.8,299.0 118.6,299.7 122.3,300.4 C126.0,301.1 129.7,301.8 133.4,302.4 C137.1,303.1 140.8,303.7 144.5,304.2 C148.2,304.7 151.9,305.1 155.6,305.5 C159.3,305.8 163.0,306.1 166.8,306.2 C170.6,306.4 174.4,306.4 178.2,306.3 C182.1,306.2 186.0,305.9 190.1,305.6 C194.1,305.3 198.2,304.9 202.5,304.4 C206.7,304.0 211.1,303.4 215.7,302.9 C220.2,302.4 227.5,301.7 229.9,301.4 M53.1,270.8 C55.0,271.2 60.7,272.3 64.5,273.1 C68.3,273.8 72.1,274.6 75.9,275.3 C79.7,276.1 83.5,276.9 87.3,277.7 C91.0,278.5 94.8,279.2 98.5,280.0 C102.3,280.8 106.0,281.6 109.7,282.4 C113.4,283.2 117.1,284.0 120.8,284.7 C124.5,285.5 128.1,286.2 131.7,286.9 C135.3,287.6 138.9,288.3 142.5,288.8 C146.1,289.4 149.6,289.9 153.2,290.3 C156.8,290.6 160.3,290.9 164.0,290.9 C167.6,291.0 171.2,290.8 174.9,290.5 C178.7,290.2 182.4,289.6 186.3,288.9 C190.2,288.2 194.1,287.3 198.3,286.4 C202.4,285.4 206.6,284.3 211.1,283.3 C215.5,282.2 222.6,280.5 224.9,280.0 M52.0,255.5 C53.9,255.8 59.6,256.5 63.4,257.1 C67.2,257.8 71.0,258.5 74.8,259.3 C78.6,260.0 82.3,260.8 86.1,261.6 C89.9,262.4 93.6,263.2 97.4,264.1 C101.1,264.9 104.8,265.8 108.5,266.6 C112.2,267.5 115.8,268.3 119.4,269.2 C123.0,270.0 126.6,270.9 130.1,271.7 C133.7,272.5 137.1,273.3 140.6,274.0 C144.0,274.6 147.4,275.3 150.8,275.8 C154.2,276.2 157.5,276.7 160.9,276.7 C164.3,276.7 167.7,276.5 171.2,275.9 C174.7,275.3 178.3,274.3 181.9,273.1 C185.6,272.0 189.3,270.5 193.2,268.9 C197.2,267.4 201.1,265.6 205.5,263.7 C209.8,261.9 216.9,258.8 219.2,257.8 M50.8,238.9 C52.7,239.2 58.4,240.1 62.2,240.8 C66.0,241.4 69.9,242.2 73.7,243.0 C77.5,243.7 81.3,244.6 85.1,245.4 C88.8,246.2 92.6,247.1 96.3,248.0 C100.0,248.9 103.8,249.8 107.4,250.8 C111.1,251.7 114.7,252.7 118.3,253.7 C121.8,254.6 125.4,255.6 128.8,256.6 C132.2,257.6 135.6,258.6 138.9,259.5 C142.2,260.5 145.3,261.5 148.5,262.2 C151.6,263.0 154.5,264.0 157.6,264.1 C160.7,264.3 163.9,264.1 167.1,263.2 C170.4,262.3 173.6,260.5 177.0,258.7 C180.3,257.0 183.7,254.8 187.3,252.5 C190.8,250.2 194.4,247.7 198.3,245.0 C202.2,242.3 208.6,237.8 210.7,236.4 M49.5,221.8 C51.5,222.2 57.3,223.3 61.1,224.0 C65.0,224.8 68.8,225.6 72.6,226.4 C76.5,227.3 80.3,228.1 84.1,229.0 C87.9,229.9 91.7,230.8 95.4,231.8 C99.2,232.8 102.9,233.8 106.6,234.8 C110.3,235.9 113.9,237.0 117.5,238.1 C121.0,239.2 124.5,240.4 127.9,241.6 C131.3,242.8 134.6,244.0 137.7,245.4 C140.9,246.7 143.9,248.0 146.6,249.5 C149.2,251.0 151.1,253.8 153.8,254.5 C156.5,255.2 159.7,255.3 162.7,253.9 C165.7,252.5 168.6,249.0 171.6,246.2 C174.6,243.5 177.5,240.5 180.5,237.3 C183.6,234.2 186.7,230.8 189.9,227.3 C193.1,223.8 198.3,218.2 200.0,216.4 M48.3,204.7 C50.3,205.1 56.1,206.4 60.0,207.2 C63.9,208.0 67.8,208.8 71.7,209.7 C75.6,210.6 79.4,211.5 83.3,212.4 C87.1,213.4 90.9,214.3 94.7,215.4 C98.5,216.4 102.3,217.5 106.0,218.6 C109.8,219.8 113.5,221.0 117.1,222.3 C120.7,223.5 124.3,224.9 127.7,226.3 C131.1,227.7 134.5,229.2 137.6,230.8 C140.7,232.4 143.8,234.1 146.3,236.0 C148.8,237.9 150.0,241.5 152.6,242.3 C155.2,243.1 160.3,239.1 162.0,241.0 C163.7,242.9 161.8,250.2 162.7,253.9 C163.6,257.6 165.7,259.5 167.1,263.2 C168.5,266.8 169.9,271.3 171.2,275.9 C172.5,280.4 173.8,285.4 174.9,290.5 C176.1,295.6 177.2,300.9 178.2,306.3 C179.3,311.7 180.3,317.2 181.2,322.8 C182.1,328.4 182.9,334.0 183.8,339.7 C184.6,345.4 185.3,351.1 186.0,356.9 C186.8,362.6 187.4,368.4 188.1,374.1 C188.8,379.9 189.4,385.7 190.0,391.5 C190.7,397.3 191.3,403.1 191.8,408.9 C192.4,414.6 193.2,423.3 193.5,426.2 M47.1,187.9 C49.1,188.3 55.0,189.5 59.0,190.3 C62.9,191.1 66.9,191.9 70.8,192.8 C74.7,193.7 78.6,194.6 82.6,195.6 C86.5,196.6 90.4,197.6 94.2,198.6 C98.1,199.7 101.9,200.9 105.8,202.1 C109.6,203.3 113.4,204.6 117.1,206.0 C120.8,207.4 124.6,208.9 128.1,210.5 C131.7,212.1 135.3,213.8 138.7,215.6 C142.0,217.4 145.3,219.4 148.4,221.3 C151.4,223.2 153.9,224.7 156.9,227.0 C159.9,229.3 163.7,231.7 166.2,234.9 C168.7,238.1 169.8,242.2 171.6,246.2 C173.4,250.2 175.3,254.3 177.0,258.7 C178.7,263.2 180.4,268.1 181.9,273.1 C183.5,278.1 184.9,283.5 186.3,288.9 C187.7,294.3 188.9,300.0 190.1,305.6 C191.2,311.3 192.3,317.1 193.3,322.9 C194.3,328.7 195.2,334.6 196.0,340.4 C196.8,346.3 197.6,352.2 198.3,358.1 C199.1,364.0 199.8,369.9 200.4,375.8 C201.1,381.7 201.7,387.6 202.4,393.4 C203.0,399.3 203.6,405.2 204.3,411.1 C204.9,417.0 206.0,425.9 206.3,428.8 M45.8,170.8 C47.9,171.2 53.9,172.4 57.9,173.2 C62.0,174.0 66.0,174.8 70.0,175.7 C74.0,176.6 78.0,177.5 81.9,178.4 C85.9,179.4 89.9,180.4 93.8,181.5 C97.8,182.6 101.7,183.8 105.7,185.1 C109.6,186.4 113.6,187.8 117.5,189.3 C121.4,190.8 125.3,192.4 129.1,194.1 C133.0,195.9 136.8,197.8 140.5,199.8 C144.3,201.9 148.0,204.1 151.6,206.5 C155.3,208.9 158.8,211.3 162.4,214.1 C166.0,216.9 170.4,219.4 173.4,223.3 C176.4,227.2 178.2,232.5 180.5,237.3 C182.9,242.2 185.2,247.2 187.3,252.5 C189.4,257.8 191.4,263.3 193.2,268.9 C195.1,274.6 196.7,280.5 198.3,286.4 C199.8,292.3 201.2,298.3 202.5,304.4 C203.7,310.5 204.9,316.6 205.9,322.7 C206.9,328.8 207.8,335.0 208.6,341.1 C209.4,347.2 210.2,353.3 210.9,359.3 C211.6,365.4 212.2,371.4 212.9,377.4 C213.5,383.4 214.1,389.4 214.8,395.4 C215.4,401.4 216.0,407.4 216.6,413.4 C217.2,419.4 218.2,428.4 218.5,431.4 M44.6,154.2 C46.7,154.5 52.9,155.4 57.0,156.0 C61.1,156.7 65.2,157.6 69.2,158.4 C73.3,159.2 77.3,160.0 81.4,161.0 C85.4,161.9 89.4,162.8 93.5,163.9 C97.5,165.0 101.5,166.2 105.6,167.5 C109.7,168.8 113.9,170.2 118.0,171.8 C122.1,173.3 126.2,175.0 130.3,176.9 C134.4,178.8 138.6,180.8 142.7,183.1 C146.9,185.4 151.1,188.0 155.2,190.7 C159.4,193.5 163.5,196.5 167.7,199.8 C172.0,203.1 177.0,205.9 180.7,210.5 C184.4,215.1 187.0,221.6 189.9,227.3 C192.8,233.1 195.7,238.9 198.3,245.0 C200.9,251.1 203.3,257.4 205.5,263.7 C207.6,270.1 209.4,276.7 211.1,283.3 C212.8,289.8 214.3,296.4 215.7,302.9 C217.0,309.5 218.2,316.1 219.2,322.6 C220.2,329.0 220.9,335.4 221.7,341.8 C222.4,348.1 223.1,354.5 223.7,360.7 C224.4,366.9 224.9,372.9 225.5,379.0 C226.1,385.1 226.6,391.2 227.2,397.4 C227.7,403.5 228.2,409.7 228.8,415.8 C229.4,421.9 230.3,430.8 230.6,433.9" fill="none" stroke="#1e1600" stroke-opacity="0.62" stroke-width="1"/>
<clipPath id="wc"><path d="M43.4,135.7 L56.2,138.4 L68.6,140.8 L80.9,143.1 L93.0,145.6 L105.4,149.2 L118.5,153.5 L131.4,158.5 L144.9,164.9 L158.8,173.6 L172.5,183.8 L187.0,198.0 L200.0,216.4 L210.7,236.4 L219.2,257.8 L224.9,280.0 L229.9,301.4 L233.5,322.8 L235.2,342.8 L236.8,362.8 L238.2,380.5 L239.6,399.3 L240.9,418.5 L242.0,436.2 L254.7,432.6 L267.4,429.0 L280.0,425.4 L292.7,421.8 L305.4,418.2 L318.1,414.6 L330.7,411.0 L343.4,407.4 L356.1,403.7 L368.8,400.1 L381.4,396.5 L394.1,392.9 L406.8,389.3 L419.5,385.7 L432.1,382.1 L444.8,378.5 L443.7,360.9 L442.4,341.8 L441.0,323.2 L439.6,305.6 L438.0,285.7 L436.3,265.9 L432.7,244.6 L427.8,223.3 L422.1,201.3 L413.6,179.8 L402.9,159.7 L389.9,141.1 L375.4,126.8 L361.7,116.6 L347.8,108.0 L334.3,101.6 L321.4,96.7 L308.3,92.4 L295.9,88.8 L283.8,86.4 L271.5,84.4 L259.1,82.3 L246.3,80.0 L233.6,83.5 L220.9,87.0 L208.3,90.4 L195.6,93.9 L182.9,97.4 L170.2,100.9 L157.5,104.4 L144.8,107.8 L132.2,111.3 L119.5,114.8 L106.8,118.3 L94.1,121.8 L81.4,125.3 L68.8,128.7 L56.1,132.2 L43.4,135.7Z"/></clipPath>
<path d="M43.6,134.5 C45.8,135.0 52.2,136.4 56.4,137.2 C60.6,138.1 64.7,138.8 68.8,139.6 C72.9,140.4 77.1,141.1 81.1,141.9 C85.2,142.7 89.2,143.4 93.3,144.4 C97.4,145.5 101.5,146.7 105.8,148.1 C110.0,149.4 114.6,150.8 118.9,152.4 C123.3,153.9 127.4,155.5 131.9,157.4 C136.3,159.3 140.9,161.3 145.5,163.8 C150.1,166.4 154.8,169.4 159.5,172.6 C164.1,175.8 168.5,178.8 173.3,182.9 C178.0,187.0 183.3,191.7 187.9,197.2 C192.5,202.7 197.0,209.3 201.0,215.8 C205.0,222.2 208.6,229.0 211.8,235.9 C215.0,242.8 218.0,250.1 220.3,257.4 C222.7,264.7 225.1,276.0 226.1,279.7" fill="none" stroke="#f3f3f3" stroke-width="2.0" clip-path="url(#wc)"/>
<path d="M225.6,279.8 C226.4,283.4 229.2,294.1 230.6,301.3 C232.0,308.4 233.3,315.8 234.2,322.7 C235.1,329.6 235.3,336.1 235.9,342.7 C236.4,349.4 237.0,356.5 237.5,362.7 C238.0,369.0 238.4,374.4 238.9,380.4 C239.4,386.5 239.8,392.9 240.3,399.3 C240.7,405.6 241.2,412.3 241.6,418.5 C242.0,424.6 242.5,433.2 242.7,436.2" fill="none" stroke="#ececee" stroke-width="1.2" clip-path="url(#wc)"/>
<path d="M45.4,133.5 L56.7,135.9 L69.1,138.2 L81.4,140.5 L93.6,143.1 L106.2,146.7 L119.4,151.1 L132.4,156.1 L146.2,162.6 L160.3,171.5 L174.2,181.8 L189.0,196.3 L202.2,215.0 L213.1,235.3 L221.7,257.0 L227.4,279.4 L232.4,300.9 L236.1,322.5 L237.8,342.6 L239.4,362.6 L240.8,380.3 L242.2,399.1 L243.5,418.3 L244.5,434.5 M244.2,434.0 L254.3,431.2 L266.9,427.5 L279.6,423.9 L292.3,420.3 L305.0,416.7 L317.6,413.1 L330.3,409.5 L343.0,405.9 L355.7,402.3 L368.3,398.7 L381.0,395.1 L393.7,391.5 L406.4,387.9 L419.0,384.3 L431.7,380.7 L443.1,377.4 M443.4,377.1 L442.4,361.0 L441.1,341.9 L439.7,323.3 L438.3,305.7 L436.7,285.8 L435.0,266.0 L431.5,244.9 L426.5,223.7 L420.8,201.7 L412.4,180.3 L401.8,160.3 L388.9,142.0 L374.5,127.8 L361.0,117.7 L347.2,109.1 L333.8,102.8 L321.0,97.9 L307.9,93.7 L295.6,90.1 L283.6,87.6 L271.3,85.7 L258.9,83.6 L247.5,81.5 M245.4,81.8 L234.0,84.9 L221.3,88.4 L208.7,91.9 L196.0,95.4 L183.3,98.9 L170.6,102.3 L157.9,105.8 L145.2,109.3 L132.6,112.8 L119.9,116.3 L107.2,119.7 L94.5,123.2 L81.8,126.7 L69.2,130.2 L56.5,133.7 L46.4,136.4" fill="none" stroke="#1c1c1c" stroke-width="1.05" stroke-dasharray="1 1.7"/>
<path d="M45.0,138.6 L55.7,140.9 L68.1,143.3 L80.4,145.6 L92.4,148.0 L104.7,151.6 L117.7,155.9 L130.4,160.8 L143.7,167.1 L157.5,175.7 M157.3,175.6 L171.1,185.4 L185.6,199.2 L198.7,217.2 L209.3,237.0 L217.8,258.3 L223.4,280.4 L228.4,301.7 L232.0,323.0 M232.1,322.9 L233.8,342.9 L235.4,362.9 L236.8,380.6 L238.2,399.4 L239.5,418.6 L240.5,434.8 M240.8,435.2 L230.7,433.2 L218.6,430.7 L206.4,428.2 L193.6,425.5 L181.5,423.0 L168.6,420.4 L156.5,417.9 L145.0,415.5 L132.8,413.0 L121.4,410.6 L109.3,408.2 L97.9,405.8 L85.8,403.3 L74.4,401.0 L64.7,399.0 M64.5,398.3 L63.5,383.8 L62.3,367.6 L61.2,351.6 L60.0,335.4 L58.8,319.1 L57.6,302.6 L56.4,286.0 L55.3,270.6 L54.2,255.3 L53.0,238.7 L51.7,221.6 L50.5,204.5 L49.3,187.7 L48.0,170.6 L46.8,154.0 L45.8,138.0" fill="none" stroke="#1a1300" stroke-width="1.05" stroke-dasharray="1 1.7"/>
</svg>
<div class="panel"><div class="inner">
<div class="blk"></div><div class="blk" style="left:708px"></div>
<div class="sep" style="left:540px;top:122px;width:168px;background:#3d3d3d"></div>
<div style="position:absolute;left:541.6px;top:129.9px;width:4.4px;height:4.4px;border-radius:50%;background:#d98a35"></div>
<div class="t" style="left:550px;top:126px;color:#f4f4f4;-webkit-text-stroke:0.2px #f4f4f4;">ZRemesher</div>

<div class="btn" style="left:545px;top:142px;width:78px;height:38px;background:#404040"><span style="top:12.5px">ZRemesher</span></div>
<div class="btn" style="left:625px;top:142px;width:78px;height:38px;"><span style="top:12.5px;letter-spacing:-0.12px">Legacy (2018)</span></div>

<div class="btn" style="left:545px;top:182px;width:78px;height:18px;"><span style="top:2.5px;letter-spacing:0.22px">FreezeBorder</span></div>
<div class="btn" style="left:625px;top:182px;width:78px;height:18px;"><span style="top:2.5px;letter-spacing:0.13px">FreezeGroups</span></div>

<div class="t dis" style="left:549px;top:203.5px;">SmoothGroups</div>
<div class="sl" style="left:548px;top:215.8px;width:72px;background:linear-gradient(90deg,rgba(130,130,130,0.1),rgba(140,140,140,0.95) 90%)"></div>
<div class="kn d" style="left:607.6px;top:213.6px;width:14.7px;"></div>
<div class="btn" style="left:625px;top:202px;width:78px;height:18px;"><span style="top:2.5px">KeepGroups</span></div>

<div class="btn" style="left:545px;top:222px;width:78px;height:18px;"><span style="top:2.5px;letter-spacing:0.1px">KeepCreases</span></div>
<div class="btn on" style="left:625px;top:222px;width:78px;height:18px;"><span style="top:2.5px">DetectEdges</span></div>
<div style="position:absolute;left:625.4px;top:240px;width:74.8px;height:5.4px;border-radius:2.7px;background:#fbfbfb;"></div><div style="position:absolute;left:627px;top:241.8px;width:71.8px;height:1.8px;border-radius:1px;background:#ee3a44;"></div>

<div class="t dis" style="left:549.3px;top:243.7px;letter-spacing:0.18px">Target Polygons Count</div>
<div class="sl" style="left:548px;top:255.6px;width:154px;background:linear-gradient(90deg,rgba(130,130,130,0.5),rgba(140,140,140,0.95) 13%,rgba(130,130,130,0.08) 75%)"></div>
<div class="kn d" style="left:560.6px;top:253.7px;width:14.8px;"></div>

<div class="btn" style="left:545px;top:262px;width:38.5px;height:18px;"><span style="top:2.5px">Half</span></div>
<div class="btn on" style="left:585.2px;top:262px;width:37.6px;height:18px;"><span style="top:2.5px;left:3.2px;letter-spacing:-0.3px">Same</span></div>
<div class="btn" style="left:625px;top:262px;width:38px;height:18px;"><span style="top:2.5px">Double</span></div>
<div class="btn" style="left:665px;top:262px;width:38px;height:18px;"><span style="top:2.5px">Adapt</span></div>

<div class="t" style="left:549px;top:283.5px;">AdaptiveSize <span style="position:absolute;left:65.5px;color:#f0f0f0">50</span></div>
<div class="sl" style="left:548px;top:295.7px;width:154px;"></div>
<div class="kn" style="left:616.7px;top:293.5px;width:14.6px;"></div>

<div class="t" style="left:549px;top:303.5px;">Curves Strength <span style="position:absolute;left:80px;color:#f0f0f0">50</span></div>
<div class="sl" style="left:548px;top:315.7px;width:154px;"></div>
<div class="kn" style="left:616.7px;top:313.6px;width:14.6px;"></div>

<div class="btn" style="left:545px;top:322px;width:78px;height:18px;"><span style="top:2.5px;letter-spacing:0.15px">Use Polypaint</span></div>
<div class="t dis" style="left:629px;top:323.5px;">ColorDensity</div>
<div class="sl" style="left:627px;top:335.9px;width:75px;background:linear-gradient(90deg,rgba(120,120,120,0.1),rgba(125,125,125,0.9) 45%,rgba(120,120,120,0.08))"></div>
<div class="kn d" style="left:653.9px;top:333.6px;width:14.6px;"></div>

<div class="sep" style="left:540px;top:341px;width:168px;background:#2f2f2f"></div><div class="sep" style="left:540px;top:342px;width:168px;background:#404040"></div>
<div class="t" style="left:550.5px;top:345.8px;color:#efefef;-webkit-text-stroke:0.12px #efefef;letter-spacing:0.18px">Modify Topology</div>
</div></div>
</body></html>
